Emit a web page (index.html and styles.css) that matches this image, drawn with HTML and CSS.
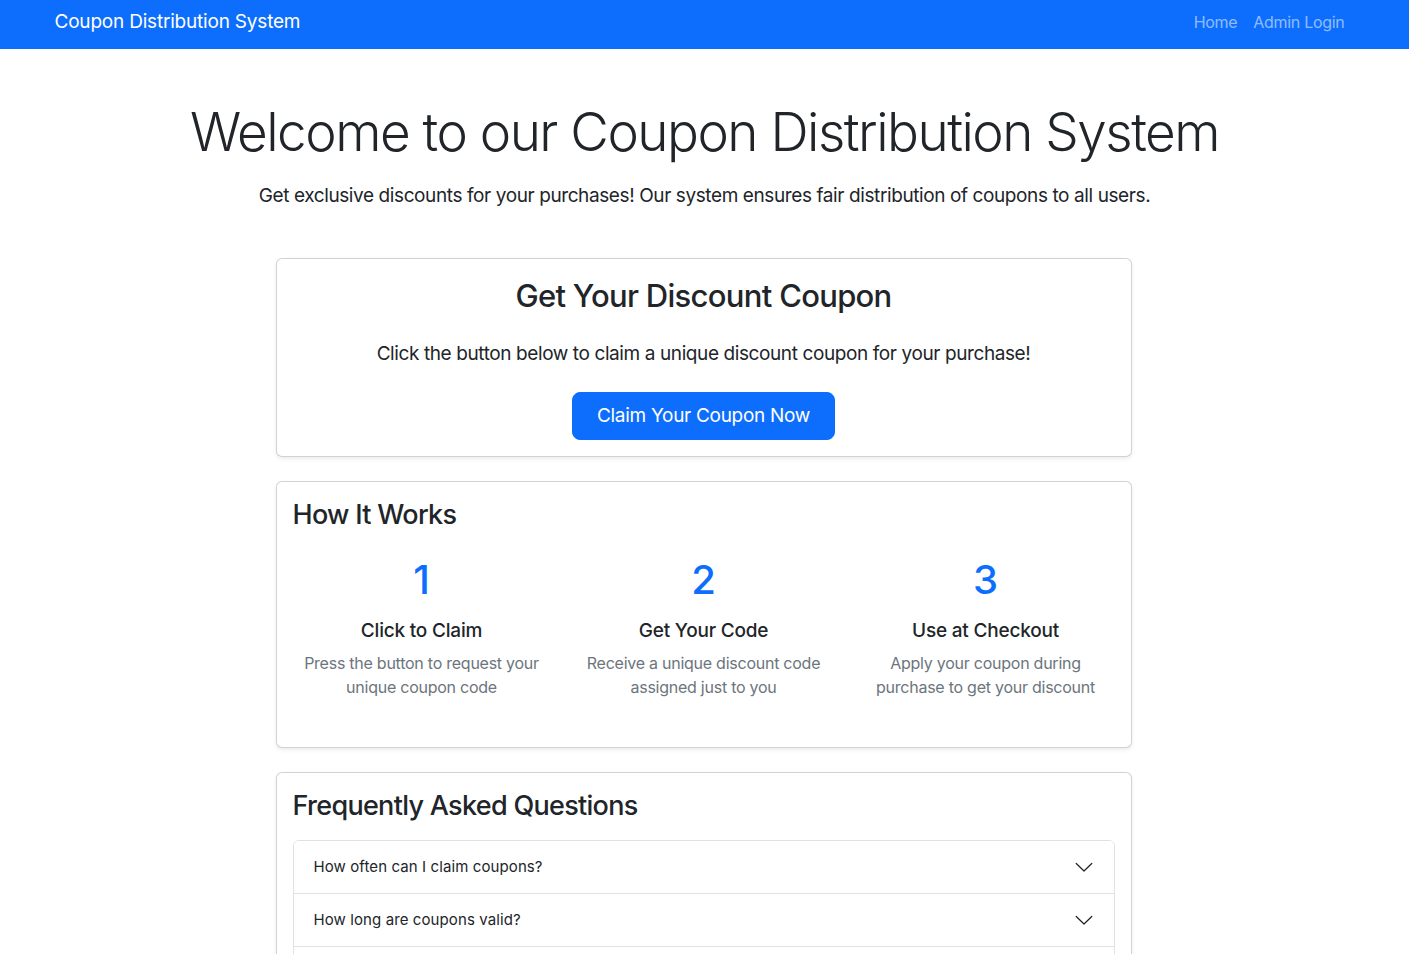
FILE: index.html
```html
<!DOCTYPE html>
<html lang="en">
<head>
<meta charset="utf-8">
<title>Coupon Distribution System</title>
<link rel="stylesheet" href="styles.css">
</head>
<body>
<nav class="navbar">
  <div class="container nav-inner">
    <a class="brand" href="#">Coupon Distribution System</a>
    <div class="nav-links">
      <a class="nav-link" href="#">Home</a>
      <a class="nav-link" href="#">Admin Login</a>
    </div>
  </div>
</nav>
<main class="container">
  <header class="hero">
    <h1 class="display">Welcome to our Coupon Distribution System</h1>
    <p class="lead">Get exclusive discounts for your purchases! Our system ensures fair distribution of coupons to all users.</p>
  </header>
  <div class="column">
    <section class="card card-claim">
      <h2 class="claim-title">Get Your Discount Coupon</h2>
      <p class="claim-text">Click the button below to claim a unique discount coupon for your purchase!</p>
      <button class="btn-primary" type="button">Claim Your Coupon Now</button>
    </section>
    <section class="card">
      <h3 class="section-title steps-title">How It Works</h3>
      <div class="steps">
        <div class="step">
          <div class="step-num">1</div>
          <h5 class="step-title">Click to Claim</h5>
          <p class="step-text">Press the button to request your unique coupon code</p>
        </div>
        <div class="step">
          <div class="step-num">2</div>
          <h5 class="step-title">Get Your Code</h5>
          <p class="step-text">Receive a unique discount code assigned just to you</p>
        </div>
        <div class="step">
          <div class="step-num">3</div>
          <h5 class="step-title">Use at Checkout</h5>
          <p class="step-text">Apply your coupon during purchase to get your discount</p>
        </div>
      </div>
    </section>
    <section class="card">
      <h3 class="section-title faq-title">Frequently Asked Questions</h3>
      <div class="accordion">
        <div class="acc-item">
          <button class="acc-btn" type="button"><span>How often can I claim coupons?</span>
            <svg class="chev" viewBox="0 0 16 16" width="20" height="20"><path fill="none" stroke="#212529" stroke-width="1" stroke-linecap="round" stroke-linejoin="round" d="M1.8 5.2 8 11.2l6.2-6"/></svg>
          </button>
        </div>
        <div class="acc-item">
          <button class="acc-btn" type="button"><span>How long are coupons valid?</span>
            <svg class="chev" viewBox="0 0 16 16" width="20" height="20"><path fill="none" stroke="#212529" stroke-width="1" stroke-linecap="round" stroke-linejoin="round" d="M1.8 5.2 8 11.2l6.2-6"/></svg>
          </button>
        </div>
        <div class="acc-item">
          <button class="acc-btn" type="button"><span>Can I use multiple coupons at once?</span>
            <svg class="chev" viewBox="0 0 16 16" width="20" height="20"><path fill="none" stroke="#212529" stroke-width="1" stroke-linecap="round" stroke-linejoin="round" d="M1.8 5.2 8 11.2l6.2-6"/></svg>
          </button>
        </div>
      </div>
    </section>
  </div>
</main>
</body>
</html>
```
FILE: styles.css
```css
* { box-sizing: border-box; }
html, body { margin: 0; padding: 0; }
body {
  font-family: Inter, "Noto Sans", "Liberation Sans", sans-serif;
  font-size: 16px;
  line-height: 1.5;
  color: #212529;
  background: #fff;
}
h1, h2, h3, h5, p { margin: 0; font-weight: 500; }
.container {
  width: 1320px;
  margin: 0 auto;
  padding: 0 12px;
}
.navbar {
  background: #0d6efd;
  height: 49px;
}
.nav-inner {
  display: flex;
  align-items: center;
  justify-content: space-between;
  height: 49px;
  padding-bottom: 6px;
}
.brand {
  color: #fff;
  text-decoration: none;
  font-size: 19px;
  letter-spacing: -0.2px;
  line-height: 30px;
  margin-left: -2px;
}
.nav-links { display: flex; margin-right: 0; }
.nav-link {
  color: rgba(255,255,255,.55);
  text-decoration: none;
  padding: 8px 8px;
  font-size: 16px;
  letter-spacing: -0.3px;
}
.hero {
  text-align: center;
  padding-top: 51px;
}
.display {
  font-size: 53px;
  font-weight: 300;
  line-height: 64px;
  letter-spacing: -1.5px;
  margin-bottom: 17px;
}
.lead {
  font-size: 19px;
  font-weight: 400;
  line-height: 30px;
  letter-spacing: -0.4px;
}
.column {
  width: 856px;
  margin: 47px auto 0;
  position: relative;
  left: -1px;
  display: flex;
  flex-direction: column;
  gap: 24px;
  padding-bottom: 40px;
}
.card {
  border: 1px solid rgba(0,0,0,.175);
  border-radius: 6px;
  padding: 16px;
  box-shadow: 0 .125rem .25rem rgba(0,0,0,.075);
  background: #fff;
}
.card-claim {
  text-align: center;
  display: flex;
  flex-direction: column;
  align-items: center;
  padding-top: 18px;
}
.claim-title {
  font-size: 31px;
  line-height: 38px;
  letter-spacing: -0.7px;
  margin-bottom: 24px;
}
.claim-text {
  font-size: 19px;
  font-weight: 400;
  line-height: 30px;
  letter-spacing: -0.4px;
  margin-bottom: 23px;
}
.btn-primary {
  font-family: inherit;
  background: #0d6efd;
  color: #fff;
  border: 1px solid #0d6efd;
  border-radius: 8px;
  font-size: 19px;
  line-height: 30px;
  padding: 8px 24px;
  letter-spacing: -0.3px;
  cursor: pointer;
}
.section-title {
  font-size: 27px;
  line-height: 34px;
  letter-spacing: -0.7px;
}
.steps-title { margin-bottom: 24px; }
.faq-title { margin-bottom: 17px; }
.steps {
  display: grid;
  grid-template-columns: repeat(3, 1fr);
  margin: 0 -12px;
}
.step {
  text-align: center;
  padding: 0 12px 16px;
}
.step-num {
  color: #0d6efd;
  font-size: 40px;
  font-weight: 500;
  line-height: 48px;
  margin-bottom: 15px;
}
.step-title {
  font-size: 19px;
  line-height: 24px;
  letter-spacing: -0.2px;
  margin-bottom: 8px;
}
.step-text {
  color: #6c757d;
  font-size: 16px;
  font-weight: 400;
  line-height: 24px;
  letter-spacing: -0.25px;
  margin-bottom: 16px;
}
.accordion {
  border: 1px solid #dee2e6;
  border-radius: 6px;
  overflow: hidden;
}
.acc-item + .acc-item { border-top: 1px solid #dee2e6; }
.acc-btn {
  width: 100%;
  display: flex;
  align-items: center;
  justify-content: space-between;
  background: #fff;
  border: 0;
  padding: 14px 20px;
  font-family: inherit;
  font-size: 15px;
  line-height: 24px;
  letter-spacing: 0.1px;
  color: #212529;
  text-align: left;
  cursor: pointer;
}
.chev { flex: none; }
```
